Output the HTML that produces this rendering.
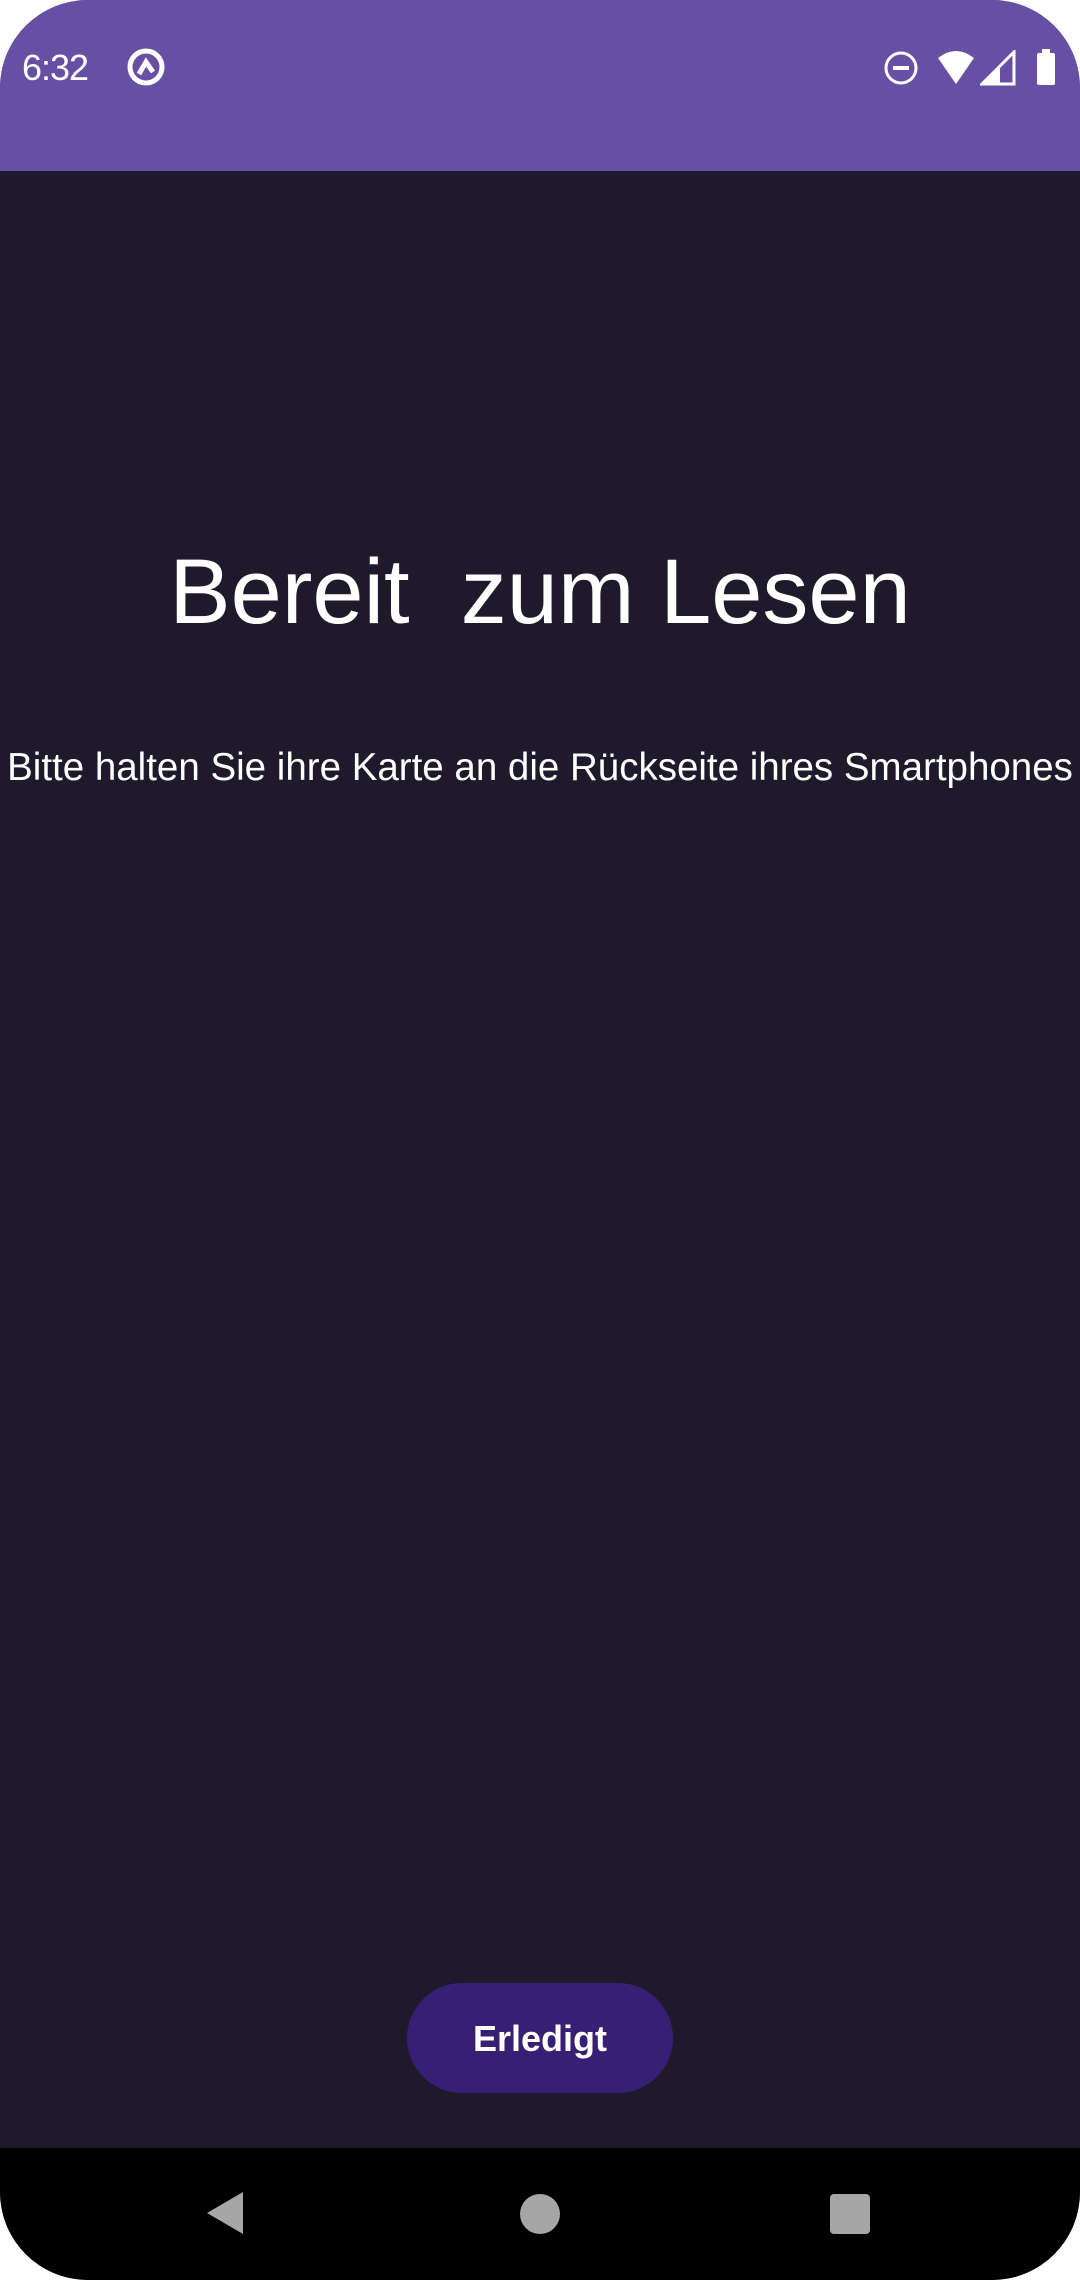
<!DOCTYPE html>
<html><head><meta charset="utf-8"><style>
html,body{margin:0;padding:0;background:#fff;}
body{width:1080px;height:2280px;position:relative;overflow:hidden;font-family:"Liberation Sans",sans-serif;}
.screen{position:absolute;left:0;top:0;width:1080px;height:2280px;border-radius:88px;overflow:hidden;background:#1e1a2b;}
.status{position:absolute;left:0;top:0;width:1080px;height:171px;background:#6750a4;}
.time{position:absolute;left:22px;top:47px;color:#fff;font-size:36px;letter-spacing:-1px;}
.title{position:absolute;left:0;width:1080px;top:540px;text-align:center;color:#fff;font-size:92px;white-space:pre;}
.sub{position:absolute;left:0;width:1080px;top:746px;text-align:center;color:#fff;font-size:38.5px;white-space:nowrap;}
.btn{position:absolute;left:407px;top:1983px;width:266px;height:110px;border-radius:55px;background:#371f73;color:#fff;font-weight:bold;font-size:36px;text-align:center;line-height:112px;}
.nav{position:absolute;left:0;top:2148px;width:1080px;height:132px;background:#000;}
</style></head><body>
<div class="screen">
<div class="status">
<div class="time">6:32</div>
<svg style="position:absolute;left:126px;top:48px" width="40" height="40" viewBox="0 0 40 40"><circle cx="20" cy="19" r="16" fill="none" stroke="#fff" stroke-width="5"/><path d="M13 26 L20 14 L27 24" fill="none" stroke="#fff" stroke-width="5"/></svg>
<svg style="position:absolute;left:884px;top:50px" width="34" height="36" viewBox="0 0 34 36"><circle cx="17" cy="18" r="15" fill="none" stroke="#fff" stroke-width="3"/><rect x="9" y="16" width="16" height="4" fill="#fff"/></svg>
<svg style="position:absolute;left:936px;top:50px" width="40" height="36" viewBox="0 0 40 36"><path d="M2 8 Q20 -6 38 8 L20 34 Z" fill="#fff"/></svg>
<svg style="position:absolute;left:980px;top:50px" width="36" height="36" viewBox="0 0 36 36"><path d="M2 34 L34 2 L34 34 Z" fill="none" stroke="#fff" stroke-width="3"/><path d="M2 34 L20 16 L20 34 Z" fill="#fff"/></svg>
<svg style="position:absolute;left:1034px;top:47px" width="24" height="40" viewBox="0 0 24 40"><rect x="8" y="2" width="8" height="5" fill="#fff"/><rect x="3" y="6" width="18" height="32" rx="2" fill="#fff"/></svg>
</div>
<div class="title">Bereit  zum Lesen</div>
<div class="sub">Bitte halten Sie ihre Karte an die Rückseite ihres Smartphones</div>
<div class="btn">Erledigt</div>
<div class="nav">
<svg style="position:absolute;left:205px;top:42px" width="40" height="46" viewBox="0 0 40 46"><path d="M2 23 L38 2 L38 44 Z" fill="#a6a6a6"/></svg>
<div style="position:absolute;left:520px;top:46px;width:40px;height:40px;border-radius:50%;background:#a6a6a6"></div>
<div style="position:absolute;left:830px;top:46px;width:40px;height:40px;border-radius:4px;background:#a6a6a6"></div>
</div>
</div>
</body></html>
